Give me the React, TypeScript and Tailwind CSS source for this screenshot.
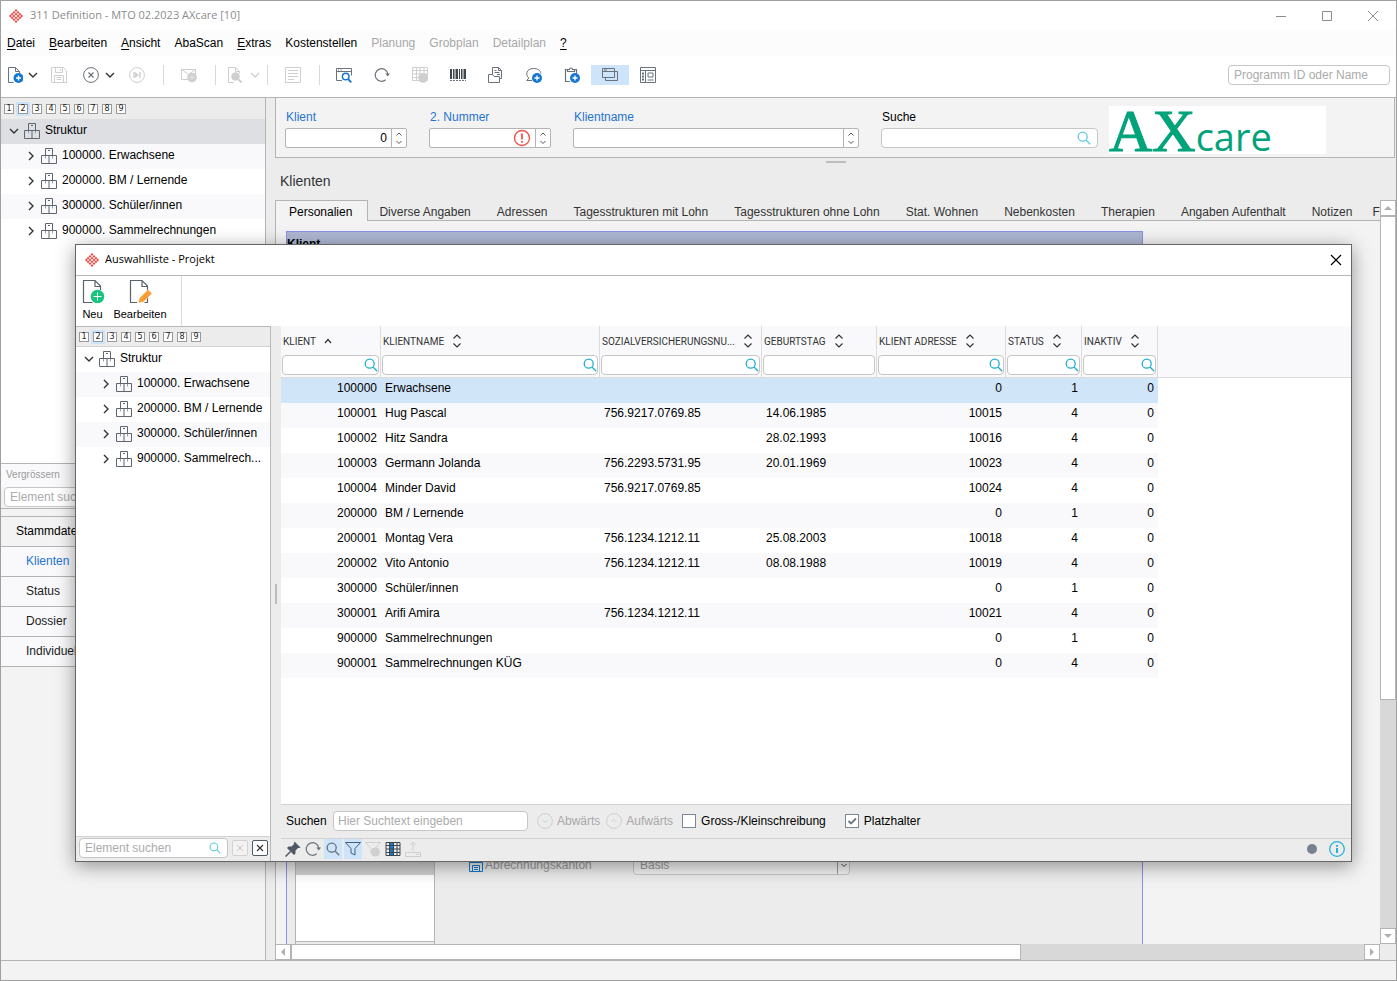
import clsx from "clsx";
import { ReactNode, useState } from "react";

const levels = [1, 2, 3, 4, 5, 6, 7, 8, 9];

const structure = [
    "100000. Erwachsene",
    "200000. BM / Lernende",
    "300000. Schüler/innen",
    "900000. Sammelrechnungen",
];

const shortStructure = [...structure.slice(0, 3), "900000. Sammelrech..."];

const menu = [
    { label: "Datei", underline: true },
    { label: "Bearbeiten", underline: true },
    { label: "Ansicht", underline: true },
    { label: "AbaScan" },
    { label: "Extras", underline: true },
    { label: "Kostenstellen" },
    { label: "Planung", disabled: true },
    { label: "Grobplan", disabled: true },
    { label: "Detailplan", disabled: true },
    { label: "?", underline: true },
];

const tabs = [
    "Personalien",
    "Diverse Angaben",
    "Adressen",
    "Tagesstrukturen mit Lohn",
    "Tagesstrukturen ohne Lohn",
    "Stat. Wohnen",
    "Nebenkosten",
    "Therapien",
    "Angaben Aufenthalt",
    "Notizen",
    "F",
];

const columns = [
    { key: "klient", label: "KLIENT", width: "w-[100px]", right: true, search: true, sort: "asc" },
    { key: "name", label: "KLIENTNAME", width: "w-[219px]", search: true },
    { key: "ahv", label: "SOZIALVERSICHERUNGSNU...", width: "w-[162px]", search: true },
    { key: "birthday", label: "GEBURTSTAG", width: "w-[115px]" },
    { key: "address", label: "KLIENT ADRESSE", width: "w-[129px]", right: true, search: true },
    { key: "status", label: "STATUS", width: "w-[76px]", right: true, search: true },
    { key: "inactive", label: "INAKTIV", width: "w-[76px]", right: true, search: true },
];

const rows = [
    ["100000", "Erwachsene", "", "", "0", "1", "0"],
    ["100001", "Hug Pascal", "756.9217.0769.85", "14.06.1985", "10015", "4", "0"],
    ["100002", "Hitz Sandra", "", "28.02.1993", "10016", "4", "0"],
    ["100003", "Germann Jolanda", "756.2293.5731.95", "20.01.1969", "10023", "4", "0"],
    ["100004", "Minder David", "756.9217.0769.85", "", "10024", "4", "0"],
    ["200000", "BM / Lernende", "", "", "0", "1", "0"],
    ["200001", "Montag Vera", "756.1234.1212.11", "25.08.2003", "10018", "4", "0"],
    ["200002", "Vito Antonio", "756.1234.1212.11", "08.08.1988", "10019", "4", "0"],
    ["300000", "Schüler/innen", "", "", "0", "1", "0"],
    ["300001", "Arifi Amira", "756.1234.1212.11", "", "10021", "4", "0"],
    ["900000", "Sammelrechnungen", "", "", "0", "1", "0"],
    ["900001", "Sammelrechnungen KÜG", "", "", "0", "4", "0"],
];

function Svg({ children, size = 16, className }: { children: ReactNode; size?: number; className?: string }) {
    return (
        <svg
            width={size}
            height={size}
            viewBox={`0 0 ${size} ${size}`}
            fill="none"
            stroke="currentColor"
            className={clsx("shrink-0", className)}
            aria-hidden="true"
        >
            {children}
        </svg>
    );
}

function AppLogo() {
    const dots = [[7, 1.5], [5, 3.4], [9, 3.4], [3.1, 5.2], [7, 5.2], [10.9, 5.2], [1.4, 7], [5, 7], [9, 7], [12.6, 7], [3.1, 8.8], [7, 8.8], [10.9, 8.8], [5, 10.6], [9, 10.6], [7, 12.5]];
    return (
        <Svg size={14}>
            {dots.map(([x, y]) => (
                <path key={`${x}-${y}`} d={`M${x} ${y - 1.4}l1.4 1.4l-1.4 1.4l-1.4 -1.4z`} fill="#f2453d" stroke="none" />
            ))}
        </Svg>
    );
}

function Magnifier({ className, size = 14 }: { className?: string; size?: number }) {
    return (
        <svg width={size} height={size} viewBox="0 0 14 14" fill="none" stroke="currentColor" strokeWidth="1.3" className={clsx("shrink-0", className)} aria-hidden="true">
            <circle cx="5.7" cy="5.7" r="4.5" />
            <path d="M9 9l4.2 4.2" />
        </svg>
    );
}

function Chevron({ dir = "down", className }: { dir?: "down" | "right" | "up"; className?: string }) {
    return (
        <Svg size={10} className={className}>
            {dir === "down" && <path d="M1 3l4 4l4-4" strokeWidth="1.4" />}
            {dir === "right" && <path d="M3 1l4 4l-4 4" strokeWidth="1.4" />}
            {dir === "up" && <path d="M2 7l3-3.5l3 3.5" strokeWidth="1.2" />}
        </Svg>
    );
}

function RefreshIcon() {
    return (
        <Svg>
            <path d="M13.8 7A6.3 6.3 0 1 0 11.7 12.8" strokeWidth="1.2" />
            <path d="M11.3 6.6h4.7l-2.3 2.8z" fill="currentColor" stroke="none" />
        </Svg>
    );
}

function PlusBadge({ cx = 11.5, cy = 11, fill = "#1577d0" }: { cx?: number; cy?: number; fill?: string }) {
    return (
        <g>
            <circle cx={cx} cy={cy} r="5" fill={fill} stroke="none" />
            <path d={`M${cx - 2.5} ${cy}h5M${cx} ${cy - 2.5}v5`} stroke="#fff" strokeWidth="1.3" />
        </g>
    );
}

function BoxesIcon() {
    return (
        <Svg className="text-[#5f6670]">
            <path d="M4.5 7.5V.5h7v7M7 2.5h2" />
            <path d="M.5 7.5h15v8H.5zM8 7.5v8" />
            <path d="M4.5 8v2.5M11.5 8v2.5" stroke="#9aa1a8" />
        </Svg>
    );
}

type ToolButtonProps = { label: string; width?: string; disabled?: boolean; active?: boolean; children: ReactNode };

function ToolButton({ label, width = "w-[38px]", disabled, active, children }: ToolButtonProps) {
    return (
        <button
            type="button"
            aria-label={label}
            disabled={disabled}
            className={clsx(
                "flex h-5 shrink-0 items-center justify-center",
                width,
                disabled ? "text-[#cfcfcf]" : "text-[#6a727b]",
                active && "bg-[#cde4fa]"
            )}
        >
            {children}
        </button>
    );
}

function Separator() {
    return (
        <div className="flex w-3 shrink-0 justify-center">
            <div className="h-5 w-px bg-[#d8d8d8]" />
        </div>
    );
}

function LevelStrip({ className }: { className: string }) {
    return (
        <div className={clsx("flex shrink-0 items-center gap-1 bg-[#ececec] pl-[3px]", className)}>
            {levels.map((level) => (
                <button
                    key={level}
                    type="button"
                    className={clsx(
                        "flex h-[10px] w-[10px] items-center justify-center border border-[#9a9a9a] bg-white font-['DejaVu_Sans'] text-[8px] leading-none text-[#222]",
                        level === 2 && "outline-2 outline-[#cde4fa]"
                    )}
                >
                    {level}
                </button>
            ))}
        </div>
    );
}

function Tree({ items, selected }: { items: string[]; selected?: boolean }) {
    return (
        <ul className="whitespace-nowrap">
            <li className={clsx("flex h-[25px] items-center gap-[5px] pb-0.5 pl-2", selected && "bg-[#dedfe3]")}>
                <Chevron className="text-[#333]" />
                <BoxesIcon />
                <span className="pb-0.5">Struktur</span>
            </li>
            {items.map((item, index) => (
                <li key={item} className={clsx("flex h-[25px] items-center gap-[5px] pb-0.5 pl-[25px]", index % 2 === 0 && "bg-[#f9f9fb]")}>
                    <Chevron dir="right" className="text-[#333]" />
                    <BoxesIcon />
                    <span className="pb-0.5">{item}</span>
                </li>
            ))}
        </ul>
    );
}

function SpinField({ id, label, width, value, warning }: { id: string; label: string; width: string; value?: string; warning?: boolean }) {
    return (
        <div className={clsx("flex shrink-0 flex-col gap-[3px]", width)}>
            <label htmlFor={id} className="pl-px leading-4 text-[#1f74cf]">{label}</label>
            <div className="flex h-5 rounded-xs border border-[#b4b4b4] bg-white">
                <input id={id} defaultValue={value} className="min-w-0 grow px-1 text-right outline-none" />
                {warning && (
                    <Svg size={18} className="mr-1 text-[#f2544b]">
                        <circle cx="9" cy="9" r="7.5" strokeWidth="1.4" />
                        <path d="M9 4.5v6M9 12v1.7" strokeWidth="1.8" />
                    </Svg>
                )}
                <button type="button" aria-label={`${label} ändern`} className="flex w-[15px] shrink-0 flex-col items-center justify-center border-l border-[#b4b4b4] text-[#555]">
                    <Svg size={14}>
                        <path d="M4.5 4.5l2.5-2.5l2.5 2.5M4.5 10l2.5 2.5l2.5-2.5" />
                    </Svg>
                </button>
            </div>
        </div>
    );
}

function ScrollButton({ dir, className }: { dir: "up" | "down" | "left" | "right"; className?: string }) {
    return (
        <button type="button" aria-label={`Scroll ${dir}`} className={clsx("flex h-4 w-4 shrink-0 items-center justify-center border border-[#b4b4b4] bg-white text-[#b0b0b0]", className)}>
            <Svg size={8}>
                {dir === "up" && <path d="M0 6l4-4l4 4z" fill="currentColor" stroke="none" />}
                {dir === "down" && <path d="M0 2l4 4l4-4z" fill="currentColor" stroke="none" />}
                {dir === "left" && <path d="M6 0l-4 4l4 4z" fill="currentColor" stroke="none" />}
                {dir === "right" && <path d="M2 0l4 4l-4 4z" fill="currentColor" stroke="none" />}
            </Svg>
        </button>
    );
}

function Toolbar() {
    return (
        <div className="flex h-[41px] shrink-0 items-center bg-white pb-[3px] pl-0.5 pr-1.5">
            <ToolButton label="Neu" width="w-6">
                <Svg>
                    <path d="M6.5 15.5H1.5V.5h7l4 4v1.5M8.5.5v4h4" />
                    <PlusBadge />
                </Svg>
            </ToolButton>
            <ToolButton label="Neu Auswahl" width="w-3"><Chevron className="text-[#333]" /></ToolButton>
            <ToolButton label="Speichern" width="w-10" disabled>
                <Svg>
                    <path d="M.5.5h12l3 3v12H.5zM4.5.5v5h7v-5M9.5 2v2M3.5 15.5v-7h9v7M5.5 10.5h5M5.5 12.5h5" />
                </Svg>
            </ToolButton>
            <ToolButton label="Abbrechen" width="w-6">
                <Svg>
                    <circle cx="8" cy="8" r="7.4" />
                    <path d="M5.5 5.5l5 5M10.5 5.5l-5 5" strokeWidth="1.2" />
                </Svg>
            </ToolButton>
            <ToolButton label="Abbrechen Auswahl" width="w-3.5"><Chevron className="text-[#333]" /></ToolButton>
            <ToolButton label="Weiter" width="w-10" disabled>
                <Svg>
                    <circle cx="8" cy="8" r="7.4" />
                    <path d="M5 5v6M11 5v6" strokeWidth="1.4" />
                    <path d="M6 5l4 3l-4 3z" fill="currentColor" stroke="none" />
                </Svg>
            </ToolButton>
            <Separator />
            <ToolButton label="Mail" width="w-10" disabled>
                <Svg>
                    <path d="M.5 2.5h14v10H.5zM.5 2.5l7 5l7-5" />
                    <circle cx="11" cy="10.5" r="4.8" fill="currentColor" stroke="none" />
                    <path d="M8.5 10.5h5M11 8v5" stroke="#e4e4e4" />
                </Svg>
            </ToolButton>
            <Separator />
            <ToolButton label="Vorschau" width="w-7" disabled>
                <Svg>
                    <path d="M7 15.5H1.5V.5h7l4 4v2M8.5.5v4h4" />
                    <circle cx="8.5" cy="9.5" r="3.8" fill="currentColor" />
                    <path d="M11.5 12.5l3 3" strokeWidth="2" />
                </Svg>
            </ToolButton>
            <ToolButton label="Vorschau Auswahl" width="w-3" disabled><Chevron /></ToolButton>
            <Separator />
            <ToolButton label="Liste" width="w-10" disabled>
                <Svg>
                    <path d="M.5.5h15v15H.5zM3 3.5h10M3 6.5h10M3 9.5h10M3 12.5h6" />
                </Svg>
            </ToolButton>
            <Separator />
            <ToolButton label="Fenster suchen">
                <Svg>
                    <path d="M6 13.5H.5v-12h15v7M.5 4.5h15M2 3h1M4.5 3h1" />
                    <circle cx="9.7" cy="9.5" r="3.3" stroke="#1577d0" strokeWidth="1.5" />
                    <path d="M12 12l3.3 3.3" stroke="#1577d0" strokeWidth="1.8" />
                </Svg>
            </ToolButton>
            <ToolButton label="Aktualisieren"><RefreshIcon /></ToolButton>
            <ToolButton label="Tabelle" disabled>
                <Svg>
                    <path d="M.5.5h15v13H.5zM.5 3.5h15M.5 7h15M.5 10.5h15M4.5.5v13M8 .5v13M12 .5v13" />
                    <circle cx="11" cy="11" r="4.8" fill="currentColor" stroke="none" />
                </Svg>
            </ToolButton>
            <ToolButton label="Barcode">
                <Svg>
                    <path d="M1 2v10M7 2v10M15 2v10" strokeWidth="2" className="text-[#3f464d]" />
                    <path d="M3.5 2v10M5 2v10M9.5 2v10M11.5 2v10M13 2v10" className="text-[#3f464d]" />
                    <path d="M0 13.5h16" strokeDasharray="2 1" />
                </Svg>
            </ToolButton>
            <ToolButton label="Drucken">
                <Svg>
                    <path d="M4.5 7.5v-7h6l3 3v8h-2M10.5.5v3h3M6.5 3.5h2M6.5 5.5h5M9 7.5h3" />
                    <path d="M.5 15.5v-8h4l1.5 2h5.5v6z" />
                </Svg>
            </ToolButton>
            <ToolButton label="Kommentar">
                <Svg>
                    <path d="M6 13.5H.8l2-2.5C-.6 8.5-.2 1.5 7.5 1.5c4.5 0 7 2 7.5 5" />
                    <PlusBadge cx={11} />
                </Svg>
            </ToolButton>
            <ToolButton label="Einfügen">
                <Svg>
                    <path d="M6 14.5H1.5v-12h2v2h7v-2h2v4M3.5 2.5h2a1.5 1.5 0 0 1 3 0h2" strokeWidth="1.2" />
                    <PlusBadge cx={11} />
                </Svg>
            </ToolButton>
            <ToolButton label="Fenster" active>
                <Svg>
                    <path d="M.5 1.5h12v9H.5zM.5 4.5h12M2 3h3" />
                    <path d="M12.5 4.5h3v9h-12v-3" />
                </Svg>
            </ToolButton>
            <ToolButton label="Layout">
                <Svg>
                    <path d="M.5.5h15v15H.5zM.5 3.5h15M5.5 3.5v12M8 6h5v4H8zM7.5 13h6" />
                    <path d="M2 6.5h2M2 9.5h2M2 12.5h2" strokeWidth="2" />
                </Svg>
            </ToolButton>
            <input
                aria-label="Programm ID oder Name"
                placeholder="Programm ID oder Name"
                className="ml-auto h-5 w-[162px] rounded-sm border border-[#c6c6c6] bg-white px-[5px] outline-none placeholder:text-[#ababab]"
            />
        </div>
    );
}

function Sidebar() {
    return (
        <aside className="flex w-[265px] shrink-0 flex-col border-r border-[#b4b4b4] bg-[#f3f3f3]">
            <div className="flex h-[366px] shrink-0 flex-col border-b border-[#b4b4b4] bg-white">
                <LevelStrip className="h-[21px]" />
                <Tree items={structure} selected />
            </div>
            <div className="shrink-0 border-b border-[#b4b4b4] pb-px">
                <p className="bg-[#f9f9fb] pb-[5px] pl-[5px] pt-1 text-[10px] leading-[14px] text-[#999]">Vergrössern</p>
                <div className="px-[3px]">
                    <input
                        aria-label="Element suchen"
                        placeholder="Element suchen"
                        className="block h-5 w-full rounded-sm border border-[#c6c6c6] bg-white px-[5px] outline-none placeholder:text-[#ababab]"
                    />
                </div>
            </div>
            <nav className="mt-[7px] border-t border-[#b4b4b4]">
                <p className="border-b border-[#b4b4b4] pb-[7px] pl-[15px] pt-1.5 leading-4">Stammdaten</p>
                {["Klienten", "Status", "Dossier", "Individuelle"].map((item, index) => (
                    <a
                        key={item}
                        href="#"
                        className={clsx("block border-b border-[#b4b4b4] bg-[#f9f9fb] pb-[7px] pl-[25px] pt-1.5 leading-4", index === 0 ? "text-[#1f74cf]" : "text-[#222]")}
                    >
                        {item}
                    </a>
                ))}
            </nav>
        </aside>
    );
}

function ClientHeader() {
    return (
        <div className="mr-px flex h-[60px] shrink-0 border-b border-l border-r border-[#b4b4b4] bg-[#f3f3f3] pl-[9px] pt-[11px]">
            <div className="flex shrink-0 gap-[22px]">
                <SpinField id="klient" label="Klient" width="w-[122px]" value="0" />
                <SpinField id="nummer" label="2. Nummer" width="w-[122px]" warning />
                <SpinField id="klientname" label="Klientname" width="w-[286px]" />
                <div className="flex w-[217px] flex-col gap-[3px]">
                    <label htmlFor="suche" className="pl-px leading-4">Suche</label>
                    <div className="flex h-5 items-center rounded-sm border border-[#c6c6c6] bg-white pr-1.5">
                        <input id="suche" className="min-w-0 grow px-1 outline-none" />
                        <Magnifier className="text-[#5fcbe0]" />
                    </div>
                </div>
            </div>
            <div className="-mt-[3px] ml-[11px] flex h-12 w-[217px] shrink-0 items-baseline whitespace-nowrap bg-white leading-[50px] text-[#00a37a]">
                <span className="font-['Liberation_Serif'] text-[60px] [-webkit-text-stroke:1px_#00a37a]">AX</span>
                <span className="font-['Open_Sans'] text-[38px]">care</span>
            </div>
        </div>
    );
}

function ClientForm() {
    return (
        <div className="flex min-w-0 grow flex-col">
            <div role="tablist" className="flex h-[21px] shrink-0 overflow-hidden whitespace-nowrap">
                {tabs.map((tab, index) => (
                    <button
                        key={tab}
                        type="button"
                        role="tab"
                        aria-selected={index === 0}
                        className={clsx(
                            "shrink-0",
                            index === 0
                                ? "border border-b-0 border-[#b4b4b4] bg-[#f3f3f3] pl-[13px] pr-[15px] pt-0.5"
                                : "border-b border-[#b4b4b4] pl-[11px] pr-[15px] pt-[3px] text-[#333] last:pl-[5px] last:pr-0"
                        )}
                    >
                        {tab}
                    </button>
                ))}
            </div>
            <div className="flex grow flex-col border-l border-[#b4b4b4] bg-[#f3f3f3] pl-2.5 pt-2.5">
                <fieldset className="flex w-[857px] grow flex-col border border-b-0 border-[#8b90e8] bg-[#ececec]">
                    <div className="h-5 bg-[#aeb7d2] pt-1 font-bold leading-4">Klient</div>
                    <div className="flex grow items-end gap-[34px] pl-2">
                        <div className="flex flex-col self-stretch border-x border-[#b4b4b4]">
                            <div className="grow bg-[#d0d0d0]" />
                            <div className="h-[67px] w-[138px] border-b border-[#b4b4b4] bg-white" />
                            <div className="h-0.5" />
                        </div>
                        <div className="flex items-center pb-[69px]">
                            <Svg className="text-[#1577d0]">
                                <path d="M2.5 5.5v-5h9v5M.5 5.5h13v9H.5z" />
                                <path d="M3.5 14.5v-6h7v6M5 10.5h4M5 12.5h4" />
                            </Svg>
                            <label htmlFor="kanton" className="w-[148px] text-[#999]">Abrechnungskanton</label>
                            <div className="relative">
                                <select id="kanton" disabled className="block h-5 w-[217px] appearance-none rounded-sm border border-[#c6c6c6] bg-[#f3f3f3] px-1.5 text-[#999] opacity-100">
                                    <option>Basis</option>
                                </select>
                                <div className="pointer-events-none absolute inset-y-px right-px flex w-3 items-center justify-center border-l border-[#999]">
                                    <Svg size={8} className="text-[#444]"><path d="M1.5 3l2.5 2.5l2.5-2.5" /></Svg>
                                </div>
                            </div>
                        </div>
                    </div>
                </fieldset>
            </div>
        </div>
    );
}

function SelectionTable() {
    return (
        <div className="min-h-0 grow bg-white">
            <div className="h-[52px] border-b border-[#dcdcdc] bg-[#f9f9fb]" />
            <table className="-mt-[52px] w-[877px] table-fixed border-collapse text-left">
                <colgroup>
                    {columns.map((column) => <col key={column.key} className={column.width} />)}
                </colgroup>
                <thead>
                    <tr className="h-[52px]">
                        {columns.map((column) => (
                            <th key={column.key} className="p-0 align-top font-normal">
                                <div className="flex h-[51px] flex-col gap-[5px] border-r border-[#dcdcdc] px-px pt-1.5">
                                    <span className="flex h-[18px] items-center gap-[7px] whitespace-nowrap pl-px font-['Roboto'] text-[10px] text-[#333]">
                                        {column.label}
                                        {column.sort ? (
                                            <Chevron dir="up" className="text-[#333]" />
                                        ) : (
                                            <Svg size={14} className="-ml-px text-[#333]">
                                                <path d="M3.5 4.5l3.5-3.5l3.5 3.5M3.5 9.5l3.5 3.5l3.5-3.5" strokeWidth="1.2" />
                                            </Svg>
                                        )}
                                    </span>
                                    <span className="flex h-5 items-center rounded-sm border border-[#c6c6c6] bg-white">
                                        <input aria-label={`Filter ${column.label}`} className="w-0 min-w-0 grow outline-none" />
                                        {column.search && <Magnifier className="text-[#1fb0d0]" />}
                                    </span>
                                </div>
                            </th>
                        ))}
                    </tr>
                </thead>
                <tbody>
                    {rows.map((row, index) => (
                        <tr key={row[0]} className={clsx("h-[25px]", index === 0 ? "bg-[#d0e5f8]" : index % 2 === 1 && "bg-[#f9f9fb]")}>
                            {row.map((cell, i) => (
                                <td key={columns[i].key} className={clsx("pb-[5px] pt-0 leading-5", columns[i].right ? "pr-1 text-right" : "pl-1")}>
                                    {cell}
                                </td>
                            ))}
                        </tr>
                    ))}
                </tbody>
            </table>
        </div>
    );
}

function CheckField({ id, label, checked, onChange }: { id: string; label: string; checked: boolean; onChange: (value: boolean) => void }) {
    return (
        <div className="flex items-center gap-[5px]">
            <div className="relative h-[14px] w-[14px]">
                <input
                    id={id}
                    type="checkbox"
                    checked={checked}
                    onChange={(e) => onChange(e.target.checked)}
                    className="block h-[14px] w-[14px] appearance-none border border-[#7a8794] bg-white"
                />
                {checked && (
                    <Svg size={14} className="pointer-events-none absolute inset-0 text-[#6d7782]">
                        <path d="M3.5 7l2.5 2.5l5-5" strokeWidth="1.8" />
                    </Svg>
                )}
            </div>
            <label htmlFor={id}>{label}</label>
        </div>
    );
}

function SearchBar() {
    const [matchCase, setMatchCase] = useState(false);
    const [wildcard, setWildcard] = useState(true);

    return (
        <div className="flex h-[34px] shrink-0 items-center border-t border-[#d2d2d2] pb-0.5 pl-[5px]">
            <label htmlFor="suchtext" className="w-[47px]">Suchen</label>
            <input
                id="suchtext"
                placeholder="Hier Suchtext eingeben"
                className="h-5 w-[195px] rounded-sm border border-[#c6c6c6] bg-white px-1 outline-none placeholder:text-[#ababab]"
            />
            <div className="flex gap-1.5 pl-[9px] text-[#a8a8a8]">
                <button type="button" disabled className="flex items-center gap-1">
                    <Svg className="text-[#cfcfcf]">
                        <circle cx="8" cy="8" r="7.4" />
                        <path d="M5.5 7l2.5 2.5l2.5-2.5" />
                    </Svg>
                    Abwärts
                </button>
                <button type="button" disabled className="flex items-center gap-1">
                    <Svg className="text-[#cfcfcf]">
                        <circle cx="8" cy="8" r="7.4" />
                        <path d="M5.5 9l2.5-2.5l2.5 2.5" />
                    </Svg>
                    Aufwärts
                </button>
            </div>
            <div className="flex gap-[19px] pl-[9px]">
                <CheckField id="gross" label="Gross-/Kleinschreibung" checked={matchCase} onChange={setMatchCase} />
                <CheckField id="platzhalter" label="Platzhalter" checked={wildcard} onChange={setWildcard} />
            </div>
        </div>
    );
}

function DialogStatus() {
    return (
        <div className="flex h-[23px] shrink-0 items-center gap-0.5 border-t border-[#d2d2d2] pb-0.5 pl-[3px] pr-1.5">
            <ToolButton label="Anheften" width="w-[18px]">
                <Svg className="text-[#4f5963]">
                    <path d="M9.5.5l6 6l-1.5.5l-1 0l-2.5 2.5l0 3l-1.5 1.5l-7-7l1.5-1.5l3 0l2.5-2.5l0-1z" fill="currentColor" stroke="none" />
                    <path d="M5.5 10.5l-5 5" strokeWidth="1.5" />
                </Svg>
            </ToolButton>
            <ToolButton label="Aktualisieren" width="w-[18px]"><RefreshIcon /></ToolButton>
            <ToolButton label="Suchen" width="w-[18px]" active><Magnifier /></ToolButton>
            <ToolButton label="Filter" width="w-[18px]" active>
                <Svg>
                    <path d="M.5 1.5h15l-5.5 6v6.5l-4-2v-4.500z" className="text-[#3f5f7d]" />
                </Svg>
            </ToolButton>
            <ToolButton label="Filter löschen" width="w-[18px]" disabled>
                <Svg>
                    <path d="M.5 1.5h15l-5.5 6v6.5l-4-2v-4.500z" />
                    <circle cx="10.5" cy="11" r="4.5" fill="currentColor" stroke="none" />
                </Svg>
            </ToolButton>
            <ToolButton label="Spalten" width="w-[18px]">
                <Svg>
                    <path d="M4 1h5v14H4z" fill="#1577d0" stroke="none" />
                    <path d="M1 1.5h14v13H1zM1 4.5h14M1 8h14M1 11.5h14M4.5 1v14M8.5 1v14M12 1v14" className="text-[#3f464d]" />
                </Svg>
            </ToolButton>
            <ToolButton label="Export" width="w-[18px]" disabled>
                <Svg>
                    <path d="M.5 11.5h15v4H.5zM8 10V1M5 4l3-3l3 3M11 13.5h3" />
                </Svg>
            </ToolButton>
            <div className="ml-auto flex items-center gap-3">
                <span className="h-2.5 w-2.5 rounded-full bg-[#76828d]" />
                <button type="button" aria-label="Info" className="text-[#26b2d6]">
                    <Svg className="block">
                        <circle cx="8" cy="8" r="7.3" strokeWidth="1.3" />
                        <path d="M8 7v5M8 4v1.8" strokeWidth="2" />
                    </Svg>
                </button>
            </div>
        </div>
    );
}

function SelectionDialog() {
    return (
        <div
            role="dialog"
            aria-label="Auswahlliste - Projekt"
            className="absolute bottom-[118px] left-[74px] right-11 top-[243px] flex flex-col border border-[#666] bg-[#ececec] shadow-[0_4px_18px_rgba(0,0,0,0.4)]"
        >
            <header className="flex h-[31px] shrink-0 items-center gap-1.5 border-b border-[#b8b8b8] bg-white px-[9px] pb-px">
                <AppLogo />
                <h2 className="font-['Open_Sans'] text-[11px]">Auswahlliste - Projekt</h2>
                <button type="button" aria-label="Schliessen" className="ml-auto">
                    <Svg size={12} className="block text-black"><path d="M1 1l10 10M11 1L1 11" strokeWidth="1.2" /></Svg>
                </button>
            </header>

            <div className="flex h-[50px] shrink-0 bg-white text-[11px] leading-3">
                <button type="button" className="flex w-[33px] flex-col items-center gap-[5px] pt-[3px]">
                    <Svg size={24}>
                        <path d="M11.5 23.5H2.5V1.5h11.5l5.5 5.5v4M14 1.5v6h5.5" className="text-[#5a626b]" strokeWidth="1.2" />
                        <circle cx="16.5" cy="17.5" r="6.8" fill="#17c57f" stroke="none" />
                        <path d="M12.5 17.5h8M16.5 13.5v8" stroke="#fff" />
                    </Svg>
                    Neu
                </button>
                <button type="button" className="flex w-[62px] flex-col items-center gap-[5px] pt-[3px]">
                    <Svg size={24}>
                        <path d="M9 23.5H2.5V1.5h11.5l5.5 5.5v16.5h-3M14 1.5v6h5.5" className="text-[#5a626b]" strokeWidth="1.2" />
                        <path d="M10 24l1.5-5l8.5-8.5l4 4l-8.5 8.5z" fill="#f99c33" stroke="#fff" strokeWidth=".5" />
                    </Svg>
                    Bearbeiten
                </button>
                <div className="ml-2.5 h-full w-px bg-[#dcdcdc]" />
            </div>

            <div className="flex min-h-0 grow">
                <div className="flex w-[195px] shrink-0 flex-col border-r border-t border-[#b8b8b8] bg-white">
                    <LevelStrip className="h-5 border-b border-[#d2d2d2]" />
                    <div className="min-h-0 grow">
                        <Tree items={shortStructure} />
                    </div>
                    <div className="flex h-[25px] shrink-0 items-center gap-1 border-t border-[#d2d2d2] bg-[#ececec] pb-0.5 pl-[3px] pr-0.5">
                        <div className="flex h-5 min-w-0 grow items-center rounded-sm border border-[#c6c6c6] bg-white pl-[5px] pr-1.5">
                            <input aria-label="Element suchen" placeholder="Element suchen" className="w-0 min-w-0 grow outline-none placeholder:text-[#ababab]" />
                            <Magnifier className="text-[#5fcbe0]" size={12} />
                        </div>
                        <button type="button" disabled aria-label="Leeren" className="flex h-4 w-4 items-center justify-center rounded-xs border border-[#d2d2d2] bg-[#f3f3f3] text-[#c0c0c0]">
                            <Svg size={8}><path d="M1 1l6 6M7 1L1 7" /></Svg>
                        </button>
                        <button type="button" aria-label="Suche schliessen" className="flex h-4 w-4 items-center justify-center rounded-xs border border-[#4f5963] bg-white text-[#333]">
                            <Svg size={8}><path d="M1 1l6 6M7 1L1 7" strokeWidth="1.2" /></Svg>
                        </button>
                    </div>
                </div>
                <div className="flex w-2.5 shrink-0 items-center justify-center">
                    <div className="h-5 w-0.5 bg-[#bdbdbd]" />
                </div>
                <div className="flex min-w-0 grow flex-col">
                    <SelectionTable />
                    <SearchBar />
                    <DialogStatus />
                </div>
            </div>
        </div>
    );
}

export default function App() {
    return (
        <div className="relative flex h-screen flex-col overflow-hidden border border-[#a0a0a0] bg-[#ececec] font-['Liberation_Sans',sans-serif] text-[12px] text-black">
            <header className="flex h-[29px] shrink-0 items-center bg-white pl-2 text-[#8c8c8c]">
                <AppLogo />
                <h1 className="pl-[7px] font-['Open_Sans'] text-[11px]">311 Definition - MTO 02.2023 AXcare [10]</h1>
                <div className="ml-auto flex gap-[34px] pr-[17px]">
                    <button type="button" aria-label="Minimieren"><Svg size={12} className="block"><path d="M1 6.5h10" /></Svg></button>
                    <button type="button" aria-label="Maximieren"><Svg size={12} className="block"><path d="M1.5 1.5h9v9h-9z" /></Svg></button>
                    <button type="button" aria-label="Schliessen"><Svg size={12} className="block"><path d="M1 1l10 10M11 1L1 11" /></Svg></button>
                </div>
            </header>

            <nav className="flex h-[26px] shrink-0 items-center gap-3.5 bg-[#fcfcfc] pl-1.5">
                {menu.map((item) => (
                    <button key={item.label} type="button" disabled={item.disabled} className={clsx(item.disabled && "text-[#a8a8a8]")}>
                        {item.underline ? (
                            <>
                                <span className="underline underline-offset-2">{item.label[0]}</span>
                                {item.label.slice(1)}
                            </>
                        ) : item.label}
                    </button>
                ))}
            </nav>

            <Toolbar />

            <div className="flex min-h-0 grow border-t border-[#b4b4b4]">
                <Sidebar />
                <main className="flex min-w-0 grow flex-col pl-[9px]">
                    <ClientHeader />
                    <div className="flex h-[42px] shrink-0 flex-col pt-[3px]">
                        <div className="h-0.5 w-5 self-center bg-[#bdbdbd]" />
                        <h2 className="pl-[5px] pt-2 text-[14px] leading-5 text-[#333]">Klienten</h2>
                    </div>
                    <div className="flex min-h-0 grow">
                        <ClientForm />
                        <div className="flex w-4 shrink-0 flex-col bg-[#d8d8d8]">
                            <ScrollButton dir="up" />
                            <div className="grow">
                                <div className="h-[68%] border border-[#b4b4b4] bg-white" />
                            </div>
                            <ScrollButton dir="down" />
                        </div>
                    </div>
                    <div className="mr-4 flex shrink-0 bg-[#d8d8d8]">
                        <ScrollButton dir="left" />
                        <div className="grow">
                            <div className="h-4 w-[68%] border border-[#b4b4b4] bg-white" />
                        </div>
                        <ScrollButton dir="right" />
                    </div>
                </main>
            </div>

            <footer className="h-5 shrink-0 border-t border-[#b4b4b4] bg-[#f3f3f3]" />

            <SelectionDialog />
        </div>
    );
}
